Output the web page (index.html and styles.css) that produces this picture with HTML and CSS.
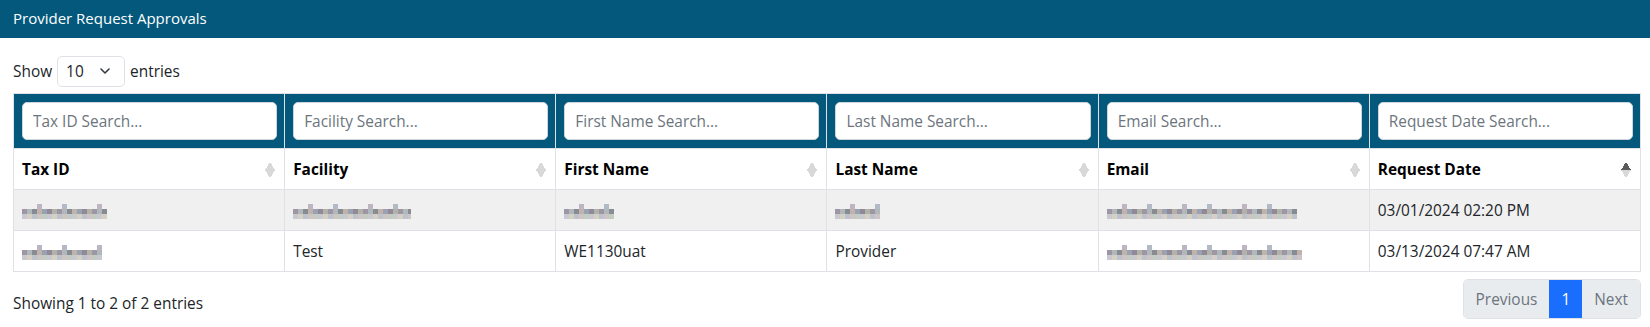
FILE: index.html
```html
<!DOCTYPE html>
<html lang="en">
<head>
    <meta charset="UTF-8">
    <meta name="viewport" content="width=device-width, initial-scale=1.0">
    <title>Provider Request Approvals</title>
    <link rel="stylesheet" href="styles.css">
</head>
<body>
    <div class="card">
        <div class="card-header">Provider Request Approvals</div>
        <div class="card-body">
            <div class="length">
                Show
                <span class="select">10
                    <svg width="12" height="8" viewBox="0 0 12 8"><path d="M2 2l4 4 4-4" fill="none" stroke="#343a40" stroke-width="1.6" stroke-linecap="round" stroke-linejoin="round"/></svg>
                </span>
                entries
            </div>

            <table class="grid">
                <thead>
                    <tr class="filters">
                        <th><input type="text" placeholder="Tax ID Search..."></th>
                        <th><input type="text" placeholder="Facility Search..."></th>
                        <th><input type="text" placeholder="First Name Search..."></th>
                        <th><input type="text" placeholder="Last Name Search..."></th>
                        <th><input type="text" placeholder="Email Search..."></th>
                        <th><input type="text" placeholder="Request Date Search..."></th>
                    </tr>
                    <tr class="titles">
                        <th class="sort">Tax ID</th>
                        <th class="sort">Facility</th>
                        <th class="sort">First Name</th>
                        <th class="sort">Last Name</th>
                        <th class="sort">Email</th>
                        <th class="sort asc">Request Date</th>
                    </tr>
                </thead>
                <tbody>
                    <tr class="odd">
                        <td><span class="blur" style="width: 85px"></span></td>
                        <td><span class="blur" style="width: 118px"></span></td>
                        <td><span class="blur" style="width: 50px"></span></td>
                        <td><span class="blur" style="width: 45px"></span></td>
                        <td><span class="blur" style="width: 190px"></span></td>
                        <td>03/01/2024 02:20 PM</td>
                    </tr>
                    <tr>
                        <td><span class="blur" style="width: 80px"></span></td>
                        <td>Test</td>
                        <td>WE1130uat</td>
                        <td>Provider</td>
                        <td><span class="blur" style="width: 195px"></span></td>
                        <td>03/13/2024 07:47 AM</td>
                    </tr>
                </tbody>
            </table>

            <div class="footer">
                <div class="info">Showing 1 to 2 of 2 entries</div>
                <div class="pager">
                    <span class="page disabled">Previous</span>
                    <span class="page active">1</span>
                    <span class="page disabled">Next</span>
                </div>
            </div>
        </div>
    </div>
</body>
</html>
```

FILE: styles.css
```css
body {
    margin: 0;
    font-family: "Open Sans", "Noto Sans", sans-serif;
    font-size: 15.4px;
    color: #212529;
    background: #fff;
}
.card-header {
    background: #03587c;
    color: #fff;
    height: 38px;
    line-height: 36px;
    padding: 0 13px;
    font-size: 15px;
}
.card-body {
    padding: 17px 9px 0 13px;
}
.length {
    display: flex;
    align-items: center;
    gap: 5px;
    height: 32px;
}
.select {
    display: inline-flex;
    align-items: center;
    justify-content: space-between;
    box-sizing: border-box;
    width: 68px;
    height: 31px;
    padding: 0 13px 0 8px;
    border: 1px solid #dee2e6;
    border-radius: 5px;
}
.grid {
    width: 100%;
    margin-top: 6px;
    border-collapse: collapse;
    table-layout: fixed;
    border: 1px solid #dee2e6;
}
.grid th, .grid td {
    border: 1px solid #dee2e6;
    text-align: left;
    padding: 0 8px;
}
.filters th {
    background: #03587c;
    height: 54px;
    padding: 0 7px 0 8px;
}
.filters input {
    display: block;
    width: 100%;
    box-sizing: border-box;
    height: 38px;
    border: 1px solid #ced4da;
    border-radius: 5px;
    padding: 0 10px;
    font: inherit;
    font-weight: 400;
    color: #6c757d;
}
.filters input::placeholder {
    color: #6c757d;
}
.titles th {
    height: 40px;
    font-weight: 700;
    color: #000;
    position: relative;
}
.sort::after {
    content: "";
    position: absolute;
    right: 9px;
    top: 13px;
    width: 10px;
    height: 16px;
    background:
        linear-gradient(to bottom right, transparent 50%, #d8d8d8 50%) left top / 5px 8px no-repeat,
        linear-gradient(to bottom left, transparent 50%, #d8d8d8 50%) right top / 5px 8px no-repeat,
        linear-gradient(to top right, transparent 50%, #d8d8d8 50%) left bottom / 5px 8px no-repeat,
        linear-gradient(to top left, transparent 50%, #d8d8d8 50%) right bottom / 5px 8px no-repeat;
}
.asc::after {
    background:
        linear-gradient(to bottom right, transparent 50%, #5a5a5a 50%) left top / 5px 8px no-repeat,
        linear-gradient(to bottom left, transparent 50%, #5a5a5a 50%) right top / 5px 8px no-repeat,
        linear-gradient(to top right, transparent 50%, #d8d8d8 50%) left bottom / 5px 8px no-repeat,
        linear-gradient(to top left, transparent 50%, #d8d8d8 50%) right bottom / 5px 8px no-repeat;
}
.grid td {
    height: 40px;
}
.odd td {
    background: #f0f0f0;
}
.blur {
    display: inline-block;
    height: 15px;
    vertical-align: middle;
    background:
        repeating-linear-gradient(90deg, transparent 0 15px, #bdb5c2 15px 20px, transparent 20px 40px, #b2bac5 40px 45px, transparent 45px 60px) left 0 / 100% 5px no-repeat,
        repeating-linear-gradient(90deg, #9e96a5 0 5px, #b0b8bb 5px 10px, #878c92 10px 15px, #bfb3ac 15px 20px, #98a2b0 20px 25px, #918898 25px 30px, #b1b3a8 30px 35px) left 5px / 100% 5px no-repeat,
        repeating-linear-gradient(90deg, #c8c9d0 0 5px, #d6cfc4 5px 10px, #bcc3cc 10px 15px, #cfc4c4 15px 20px, #c3ccc3 20px 25px) left 10px / 100% 5px no-repeat;
}
.footer {
    display: flex;
    justify-content: space-between;
    align-items: center;
    margin-top: 7px;
}
.info {
    padding-top: 8px;
}
.pager {
    display: flex;
    height: 38px;
    border: 1px solid #dee2e6;
    border-radius: 5px;
    overflow: hidden;
}
.page {
    display: flex;
    align-items: center;
    padding: 0 12px;
    background: #e9ecef;
    color: #6c757d;
}
.page.active {
    background: #1a6efd;
    color: #fff;
}
```
